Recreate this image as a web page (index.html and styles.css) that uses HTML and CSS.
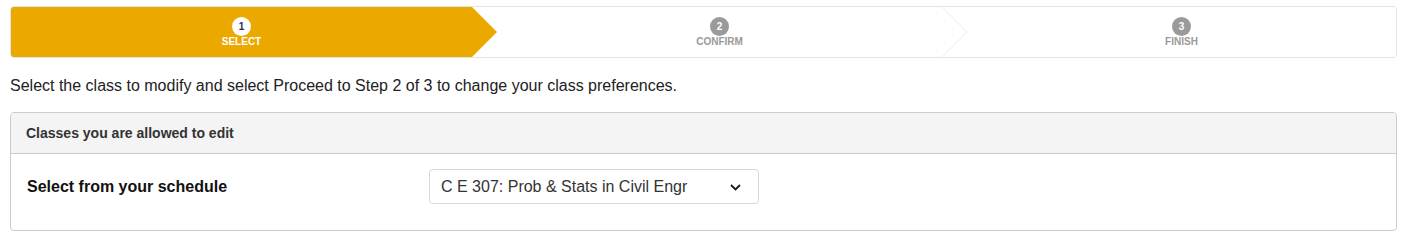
FILE: index.html
```html
<!DOCTYPE html>
<html lang="en">
<head>
<meta charset="utf-8">
<title>Modify class</title>
<link rel="stylesheet" href="styles.css">
</head>
<body>
<div class="page">
  <ol class="steps">
    <li class="step step-active">
      <span class="step-num">1</span>
      <span class="step-label">SELECT</span>
      <svg class="step-arrow" width="25" height="50" viewBox="0 0 25 50"><polygon points="0,0 25,25 0,50" fill="#eba900"/></svg>
    </li>
    <li class="step step-next">
      <span class="step-num">2</span>
      <span class="step-label">CONFIRM</span>
      <svg class="step-arrow" width="26" height="50" viewBox="0 0 26 50"><polygon points="0,0 25,25 0,50" fill="#fff"/><polyline points="0,0 25,25 0,50" fill="none" stroke="#ececec" stroke-width="1"/></svg>
    </li>
    <li class="step step-next">
      <span class="step-num">3</span>
      <span class="step-label">FINISH</span>
    </li>
  </ol>

  <p class="intro">Select the class to modify and select Proceed to Step 2 of 3 to change your class preferences.</p>

  <section class="panel">
    <header class="panel-head">Classes you are allowed to edit</header>
    <div class="panel-body">
      <label class="field-label">Select from your schedule</label>
      <div class="select-box">
        <span class="select-text">C E 307: Prob &amp; Stats in Civil Engr</span>
        <svg class="chev" width="11" height="7" viewBox="0 0 11 7"><polyline points="1,1 5.5,5.5 10,1" fill="none" stroke="#1b1b1b" stroke-width="1.8"/></svg>
      </div>
    </div>
  </section>
</div>
</body>
</html>
```

FILE: styles.css
```css
* { box-sizing: border-box; }

html, body {
  margin: 0;
  padding: 0;
  background: #fff;
}

body {
  font-family: "Liberation Sans", Arial, sans-serif;
  color: #222;
}

.page {
  padding: 6px 15px 0 10px;
}

.steps {
  list-style: none;
  margin: 0;
  padding: 0;
  display: grid;
  grid-template-columns: 461px 470px 1fr;
  height: 52px;
  border: 1px solid #e3e3e3;
  border-radius: 4px;
}

.step {
  position: relative;
  display: flex;
  flex-direction: column;
  align-items: center;
  justify-content: center;
  height: 50px;
}

.step-active {
  background: #eba900;
  border-radius: 3px 0 0 3px;
}

.step-next {
  padding-left: 25px;
}

.step-arrow {
  position: absolute;
  top: 0;
  right: -25px;
  z-index: 1;
  display: block;
}

.step-next .step-arrow {
  right: -26px;
}

.step-num {
  width: 19px;
  height: 19px;
  border-radius: 50%;
  font-size: 10px;
  font-weight: bold;
  line-height: 19px;
  text-align: center;
  background: #9a9a9a;
  color: #fff;
}

.step-active .step-num {
  background: #fff;
  color: #1d2b5c;
}

.step-label {
  font-size: 10px;
  font-weight: bold;
  line-height: 10px;
  margin-top: 1px;
  color: #9a9a9a;
}

.step-active .step-label {
  color: #fff;
}

.intro {
  margin: 18px 0 16px;
  font-size: 16px;
  line-height: 20px;
  color: #222;
}

.panel {
  border: 1px solid #cbcbcb;
  border-radius: 4px;
  overflow: hidden;
}

.panel-head {
  height: 41px;
  background: #f4f4f4;
  border-bottom: 1px solid #cbcbcb;
  padding: 0 15px;
  display: flex;
  align-items: center;
  font-size: 14px;
  font-weight: bold;
  color: #333;
}

.panel-body {
  display: grid;
  grid-template-columns: 402px 330px;
  align-items: center;
  padding: 15px 16px 26px;
}

.field-label {
  font-size: 16px;
  font-weight: bold;
  color: #111;
}

.select-box {
  height: 35px;
  border: 1px solid #d9d9d9;
  border-radius: 4px;
  display: flex;
  align-items: center;
  justify-content: space-between;
  padding: 0 17px 0 11px;
  font-size: 16px;
  color: #333;
}

.chev {
  display: block;
  margin-top: 1px;
}
```
